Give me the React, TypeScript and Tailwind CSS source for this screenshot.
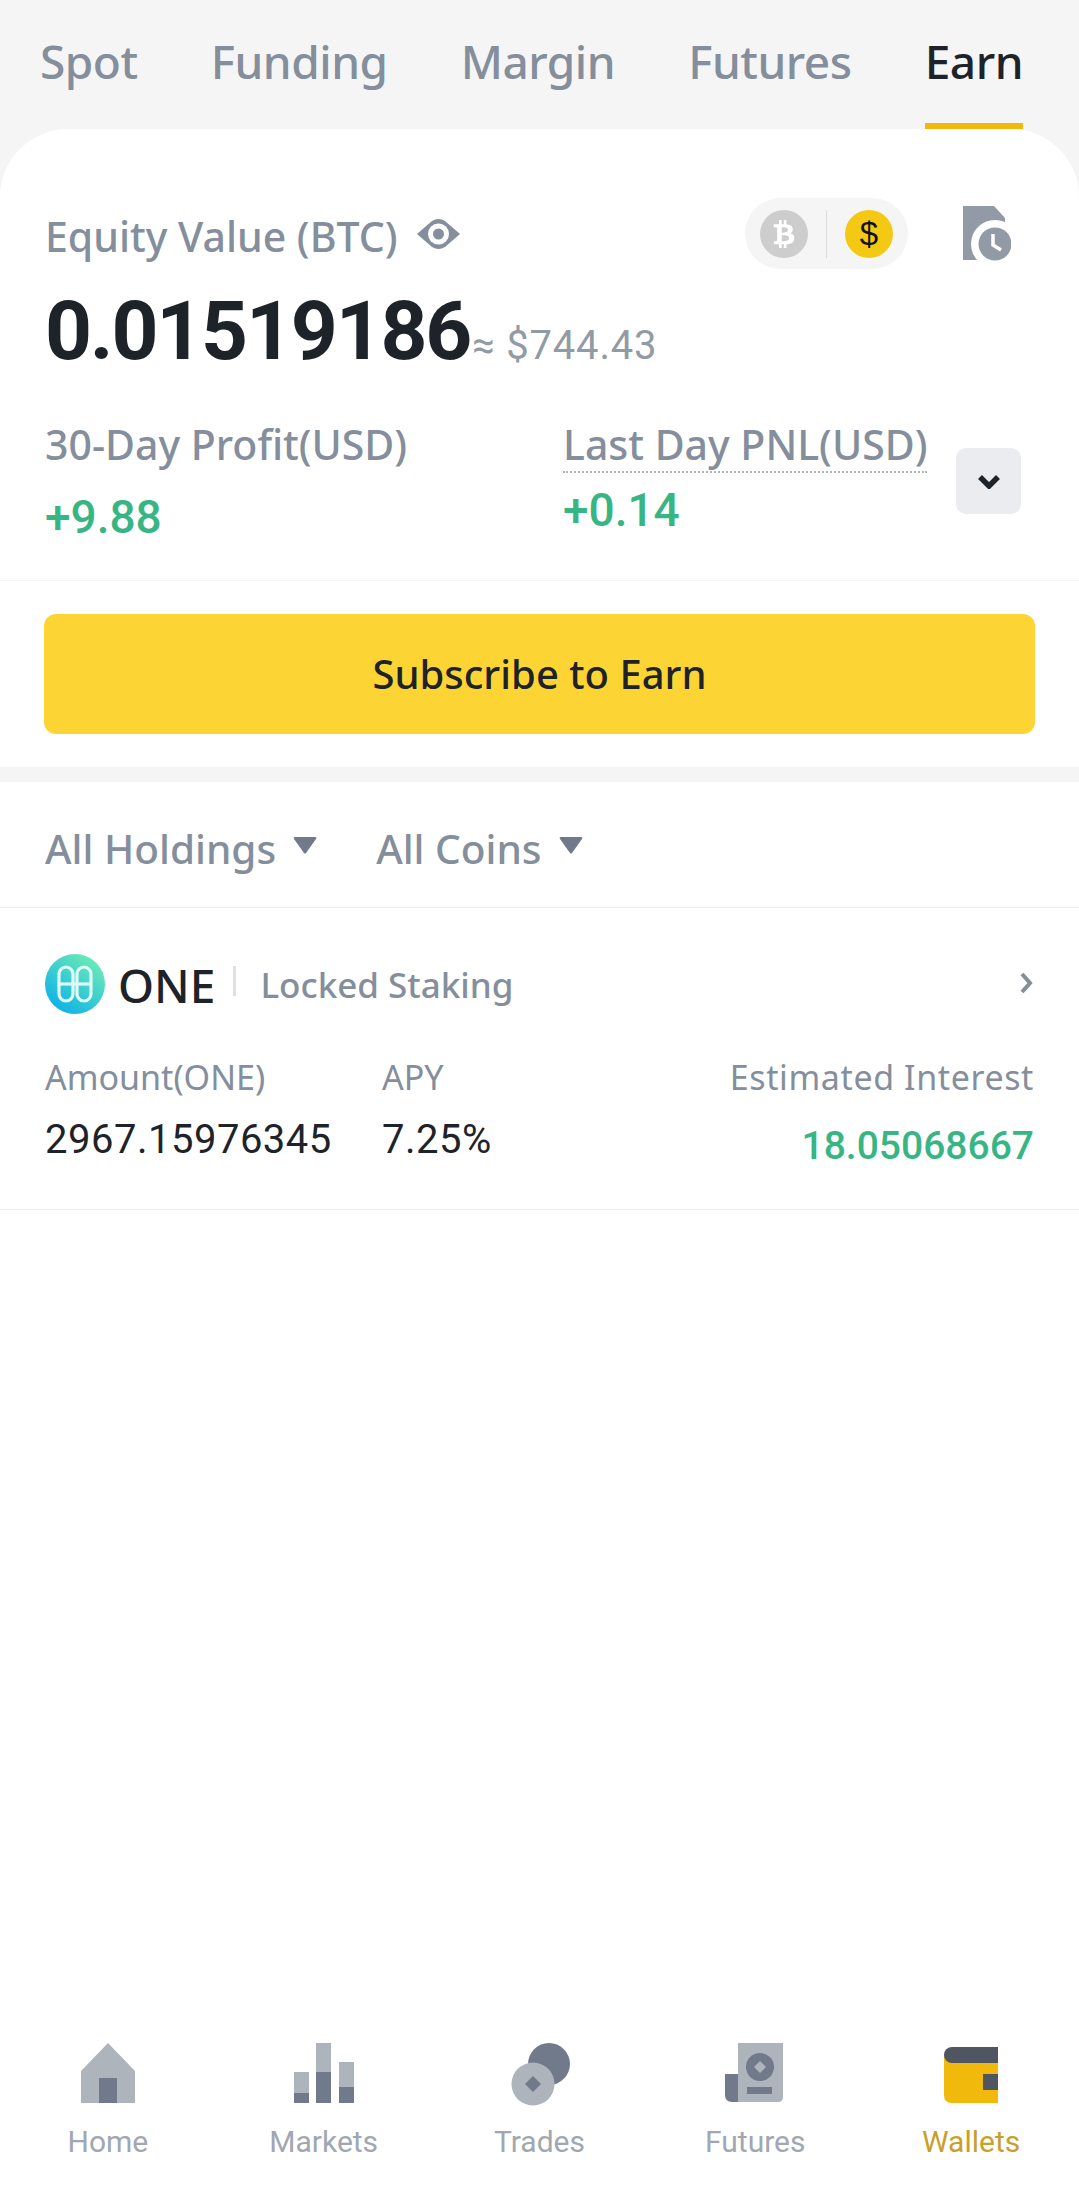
import { FaBtc } from "react-icons/fa";

const tabs = ["Spot", "Funding", "Margin", "Futures", "Earn"];

function EyeIcon() {
  return (
    <svg width="43" height="32" viewBox="0 0 43 32">
      <path d="M0 16 15 3Q21.5-1 28 3L43 16 28 29Q21.5 33 15 29Z" fill="#848e9c" />
      <circle cx="21.5" cy="16" r="10.5" fill="#fff" />
      <circle cx="21.5" cy="16" r="5.5" fill="#848e9c" />
    </svg>
  );
}

function HistoryIcon() {
  return (
    <svg width="48" height="56" viewBox="0 0 48 56">
      <path d="M0 0H31L42 12V54H0Z" fill="#929aa5" />
      <circle cx="32" cy="38" r="24" fill="#fff" />
      <circle cx="32" cy="38" r="16.5" fill="#929aa5" />
      <path d="M30 28V39L38 44" fill="none" stroke="#fff" strokeWidth="3.5" />
    </svg>
  );
}

function HomeIcon() {
  return (
    <svg width="60" height="60" viewBox="0 0 60 60">
      <path d="M30 0 57 28V60H3V28Z" fill="#aeb4bc" />
      <rect x="21" y="35" width="18" height="25" fill="#707a8a" />
    </svg>
  );
}

function MarketsIcon() {
  return (
    <svg width="60" height="60" viewBox="0 0 60 60">
      <rect x="0" y="29" width="15" height="31" fill="#aeb4bc" />
      <rect x="0" y="50" width="15" height="10" fill="#707a8a" />
      <rect x="22" y="0" width="15" height="60" fill="#aeb4bc" />
      <rect x="22" y="29" width="15" height="31" fill="#707a8a" />
      <rect x="45" y="19" width="15" height="41" fill="#aeb4bc" />
      <rect x="45" y="44" width="15" height="16" fill="#707a8a" />
    </svg>
  );
}

function TradesIcon() {
  return (
    <svg width="60" height="63" viewBox="0 0 60 63" className="-mb-[3px] ml-[3px]">
      <circle cx="38" cy="21" r="21" fill="#707a8a" />
      <circle cx="22" cy="41" r="21.5" fill="#aeb4bc" />
      <path d="M22 33 30 41 22 49 14 41Z" fill="#707a8a" />
    </svg>
  );
}

function FuturesIcon() {
  return (
    <svg width="60" height="60" viewBox="0 0 60 60">
      <path d="M0 31H14V59H7Q0 59 0 52Z" fill="#707a8a" />
      <path d="M13 0H58V54Q58 59 53 59H13Z" fill="#aeb4bc" />
      <circle cx="35" cy="24" r="14" fill="#707a8a" />
      <path d="M35 18 41 24 35 30 29 24Z" fill="#aeb4bc" />
      <rect x="22" y="44" width="25" height="7" fill="#707a8a" />
    </svg>
  );
}

function WalletsIcon() {
  return (
    <svg width="54" height="56" viewBox="0 0 54 56">
      <path d="M0 8H54V56H8Q0 56 0 48Z" fill="#f0b90b" />
      <path d="M54 0H8A8 8 0 0 0 8 16H54Z" fill="#4f5662" />
      <rect x="39" y="27" width="15" height="16" fill="#4f5662" />
    </svg>
  );
}

function OneLogo() {
  return (
    <svg width="60" height="60" viewBox="0 0 60 60">
      <defs>
        <linearGradient id="one-grad" x1="0.8" y1="0.1" x2="0.2" y2="0.9">
          <stop offset="0" stopColor="#69e9b8" />
          <stop offset="1" stopColor="#10b3e6" />
        </linearGradient>
      </defs>
      <circle cx="30" cy="30" r="30" fill="url(#one-grad)" />
      <g fill="none" stroke="#dffbf5" strokeWidth="3.2">
        <rect x="14" y="13" width="14" height="34" rx="7" />
        <rect x="32" y="13" width="14" height="34" rx="7" />
        <path d="M14 30H46" />
      </g>
    </svg>
  );
}

function Caret() {
  return (
    <svg width="24" height="17" viewBox="0 0 24 17">
      <path d="M2 0H22Q24 0 23 2L13 16Q12 17 11 16L1 2Q0 0 2 0Z" fill="#707a8a" />
    </svg>
  );
}

const navItems = [
  { label: "Home", icon: <HomeIcon /> },
  { label: "Markets", icon: <MarketsIcon /> },
  { label: "Trades", icon: <TradesIcon /> },
  { label: "Futures", icon: <FuturesIcon /> },
  { label: "Wallets", icon: <WalletsIcon />, active: true },
];

export default function App() {
  return (
    <div className="flex h-[2185px] flex-col overflow-hidden bg-[#f5f5f5] font-['Noto_Sans',sans-serif] text-[#848e9c]">
      <nav className="flex h-[129px] items-stretch justify-between pl-[40px] pr-[56px] text-[46px] font-medium">
        {tabs.map((tab) => (
          <div
            key={tab}
            className={
              tab === "Earn"
                ? "flex items-center border-b-[6px] border-[#f0b90b] tracking-[-0.5px] text-[#1e2329]"
                : "flex items-center border-b-[6px] border-transparent tracking-[-0.5px]"
            }
          >
            {tab}
          </div>
        ))}
      </nav>

      <main className="flex flex-1 flex-col rounded-t-[68px] bg-white">
        <section className="h-[452px] border-b border-[#f5f5f5]">
          <div className="mt-[69px] flex h-[71px] items-center justify-between pl-[45px] pr-[68px]">
            <div className="flex items-center gap-[19px] text-[41px] font-medium">
              <span className="pt-[6px]">Equity Value (BTC)</span>
              <EyeIcon />
            </div>
            <div className="flex items-center gap-[55px]">
              <div className="flex h-[71px] w-[163px] items-center rounded-full bg-[#f5f5f5] pl-[15px]">
                <div className="flex size-[48px] items-center justify-center rounded-full bg-[#cdcdcd] text-[28px] text-white">
                  <FaBtc />
                </div>
                <div className="mx-[18px] h-[48px] w-px bg-[#dcdcdc]" />
                <div className="flex size-[48px] items-center justify-center rounded-full bg-[#f3c913] font-['Liberation_Sans',sans-serif] text-[33px] text-[#111]">
                  $
                </div>
              </div>
              <HistoryIcon />
            </div>
          </div>

          <div className="mt-[19px] flex h-[84px] items-baseline pl-[45px] font-['Roboto',sans-serif]">
            <span className="text-[82px] font-bold leading-[86px] tracking-[-2.2px] text-[#1e2329]">
              0.01519186
            </span>
            <span className="ml-[2px] text-[40px] tracking-[0.8px] text-[#929aa5]">≈ $744.43</span>
          </div>

          <div className="mt-[44px] flex items-start pl-[45px] pr-[58px]">
            <div className="w-[518px]">
              <div className="h-[56px] text-[41px] font-medium leading-[56px]">30-Day Profit(USD)</div>
              <div className="mt-[20px] font-['Roboto',sans-serif] text-[46px] font-medium leading-[50px] text-[#38b584]">
                +9.88
              </div>
            </div>
            <div className="flex-1">
              <div className="inline-block h-[57px] border-b-2 border-dotted border-[#aeb4bc] text-[41px] font-medium leading-[56px]">
                Last Day PNL(USD)
              </div>
              <div className="mt-[12px] font-['Roboto',sans-serif] text-[46px] font-medium leading-[50px] text-[#38b584]">
                +0.14
              </div>
            </div>
            <div className="mt-[32px] flex h-[66px] w-[65px] items-center justify-center rounded-[10px] bg-[#eaecef]">
              <svg width="24" height="15" viewBox="0 0 24 15">
                <path d="M3 3 12 12 21 3" fill="none" stroke="#1e2329" strokeWidth="5.5" />
              </svg>
            </div>
          </div>
        </section>

        <section className="h-[201px] border-b-[15px] border-[#f5f5f5] px-[44px] pt-[33px]">
          <button className="flex h-[120px] w-full items-center justify-center rounded-[12px] bg-[#fcd535] text-[40px] font-medium text-[#1e2329]">
            Subscribe to Earn
          </button>
        </section>

        <section className="flex h-[126px] items-center border-b border-[#eaecef] pt-[10px] pl-[45px] text-[40.5px] font-medium">
          <span>All Holdings</span>
          <span className="mb-[8px] ml-[17px]">
            <Caret />
          </span>
          <span className="ml-[59px]">All Coins</span>
          <span className="mb-[8px] ml-[17px]">
            <Caret />
          </span>
        </section>

        <section className="h-[302px] border-b border-[#eaecef] px-[45px]">
          <div className="mt-[46px] flex h-[60px] items-center">
            <OneLogo />
            <span className="ml-[13px] pt-[3px] text-[46px] font-medium text-[#1e2329]">ONE</span>
            <span className="mb-[6px] ml-[18px] h-[30px] w-[3px] bg-[#e0e0e0]" />
            <span className="ml-[24px] pt-[3px] text-[35px] font-medium">Locked Staking</span>
            <svg className="mb-[3px] ml-auto" width="15" height="22" viewBox="0 0 15 22">
              <path d="M3 2 11 11 3 20" fill="none" stroke="#848e9c" strokeWidth="4" />
            </svg>
          </div>
          <div className="mt-[40px] flex font-['Roboto',sans-serif]">
            <div className="w-[337px]">
              <div className="font-['Noto_Sans',sans-serif] text-[34px] leading-[46px]">Amount(ONE)</div>
              <div className="mt-[17px] text-[40px] leading-[46px] tracking-[0.5px] text-[#1e2329]">2967.15976345</div>
            </div>
            <div>
              <div className="font-['Noto_Sans',sans-serif] text-[34px] leading-[46px]">APY</div>
              <div className="mt-[17px] text-[40px] leading-[46px] tracking-[0.5px] text-[#1e2329]">7.25%</div>
            </div>
            <div className="ml-auto text-right">
              <div className="font-['Noto_Sans',sans-serif] text-[34px] leading-[46px] tracking-[0.6px]">Estimated Interest</div>
              <div className="mt-[23px] text-[39px] font-medium leading-[46px] text-[#38b584]">18.05068667</div>
            </div>
          </div>
        </section>

        <div className="flex-1" />

        <footer className="grid h-[142px] grid-cols-5 font-['Roboto',sans-serif] text-[30px] text-[#a1a7b2]">
          {navItems.map((item) => (
            <div key={item.label} className="flex flex-col items-center">
              <div className="flex h-[60px] items-end">{item.icon}</div>
              <span className={item.active ? "mt-[22px] leading-[33px] text-[#c99f2c]" : "mt-[22px] leading-[33px]"}>
                {item.label}
              </span>
            </div>
          ))}
        </footer>
      </main>
    </div>
  );
}
